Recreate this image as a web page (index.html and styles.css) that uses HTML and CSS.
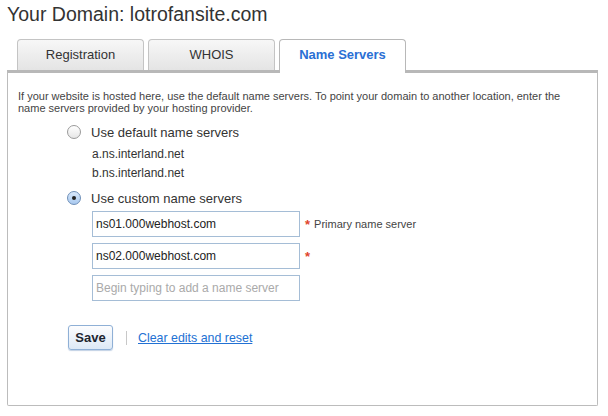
FILE: index.html
```html
<!DOCTYPE html>
<html>
  <head>
    <meta charset="utf-8">
    <title>Your Domain</title>
    <link rel="stylesheet" href="styles.css">
  </head>
  <body>
    <h1 class="page-title">Your Domain: lotrofansite.com</h1>
    <ul class="tabs">
      <li class="tab">Registration</li>
      <li class="tab">WHOIS</li>
      <li class="tab active">Name Servers</li>
    </ul>
    <div class="panel">
      <p class="intro">If your website is hosted here, use the default name servers. To point your domain to another location, enter the name servers provided by your hosting provider.</p>
      <div class="choice">
        <span class="radio"></span>
        <span class="choice-label">Use default name servers</span>
      </div>
      <div class="ns">a.ns.interland.net</div>
      <div class="ns">b.ns.interland.net</div>
      <div class="choice custom">
        <span class="radio checked"></span>
        <span class="choice-label">Use custom name servers</span>
      </div>
      <div class="field">
        <input class="text" type="text" value="ns01.000webhost.com">
        <span class="req">*</span>
        <span class="hint">Primary name server</span>
      </div>
      <div class="field">
        <input class="text" type="text" value="ns02.000webhost.com">
        <span class="req">*</span>
      </div>
      <div class="field">
        <input class="text" type="text" placeholder="Begin typing to add a name server">
      </div>
      <div class="actions">
        <button class="save">Save</button>
        <span class="sep"></span>
        <a class="reset" href="#">Clear edits and reset</a>
      </div>
    </div>
  </body>
</html>
```

FILE: styles.css
```css
body {
  margin: 0;
  font-family: "Liberation Sans", Arial, sans-serif;
  color: #333;
  background: #fff;
}
.page-title {
  margin: 0;
  padding: 4px 0 0 7px;
  font-size: 19.5px;
  font-weight: normal;
  line-height: 20px;
  color: #333;
}
.tabs {
  display: flex;
  gap: 4px;
  list-style: none;
  margin: 15px 0 0 17px;
  padding: 0;
}
.tab {
  box-sizing: border-box;
  width: 127px;
  height: 31px;
  border: 1px solid #c4c4c4;
  border-bottom: none;
  border-radius: 4px 4px 0 0;
  background: linear-gradient(#f7f7f7, #e4e4e4);
  font-size: 13px;
  line-height: 30px;
  text-align: center;
  color: #333;
}
.tab.active {
  height: 34px;
  margin-bottom: -3px;
  background: #fff;
  border-color: #b8b8b8;
  color: #2a6fd4;
  font-weight: bold;
  position: relative;
}
.panel {
  box-sizing: border-box;
  width: 591px;
  height: 336px;
  margin-left: 7px;
  border: 1px solid #bcbcbc;
  border-top: 3px solid #b8b8b8;
  border-radius: 0 0 2px 2px;
  padding: 17px 0 0 10px;
}
.intro {
  margin: 0;
  width: 550px;
  font-size: 11px;
  line-height: 12px;
  color: #444;
}
.choice {
  display: flex;
  align-items: center;
  margin: 9px 0 0 49px;
  height: 18px;
}
.choice.custom {
  margin-top: 6px;
}
.radio {
  box-sizing: border-box;
  width: 14px;
  height: 14px;
  border-radius: 50%;
  border: 1px solid #9a9a9a;
  background: linear-gradient(#fff, #e6e6e6);
  margin-right: 10px;
  position: relative;
}
.radio.checked {
  border-color: #6e8fb8;
  background: linear-gradient(#d8e8fb, #a9c9ef);
}
.radio.checked::after {
  content: "";
  position: absolute;
  left: 4px;
  top: 4px;
  width: 4px;
  height: 4px;
  border-radius: 50%;
  background: #222;
}
.choice-label {
  font-size: 13px;
  color: #333;
}
.ns {
  margin: 0 0 0 74px;
  font-size: 12px;
  line-height: 19px;
  color: #333;
}
.choice + .ns {
  margin-top: 4px;
}
.field {
  display: flex;
  align-items: center;
  margin: 6px 0 0 74px;
}
.choice.custom + .field {
  margin-top: 4px;
}
.text {
  box-sizing: border-box;
  width: 208px;
  height: 26px;
  border: 1px solid #a5bdd6;
  padding: 0 3px;
  font-family: "Liberation Sans", Arial, sans-serif;
  font-size: 12px;
  color: #222;
  outline: none;
}
.text::placeholder {
  color: #aaa;
}
.req {
  color: #e0452c;
  font-size: 13px;
  font-weight: bold;
  margin-left: 5px;
  align-self: flex-start;
  margin-top: 6px;
}
.hint {
  font-size: 11px;
  color: #444;
  margin-left: 4px;
}
.actions {
  display: flex;
  align-items: center;
  margin: 24px 0 0 50px;
}
.save {
  box-sizing: border-box;
  width: 45px;
  height: 25px;
  border: 1px solid #8fb0d6;
  border-radius: 3px;
  background: linear-gradient(#fdfdfe, #dde9f6);
  font-family: "Liberation Sans", Arial, sans-serif;
  font-size: 13px;
  font-weight: bold;
  color: #1d2530;
  padding: 0;
  box-shadow: 0 1px 1px rgba(100, 140, 190, 0.4);
}
.sep {
  width: 1px;
  height: 14px;
  background: #c8c8c8;
  margin: 0 11px 0 13px;
}
.reset {
  font-size: 12.4px;
  color: #2271d3;
}
```
